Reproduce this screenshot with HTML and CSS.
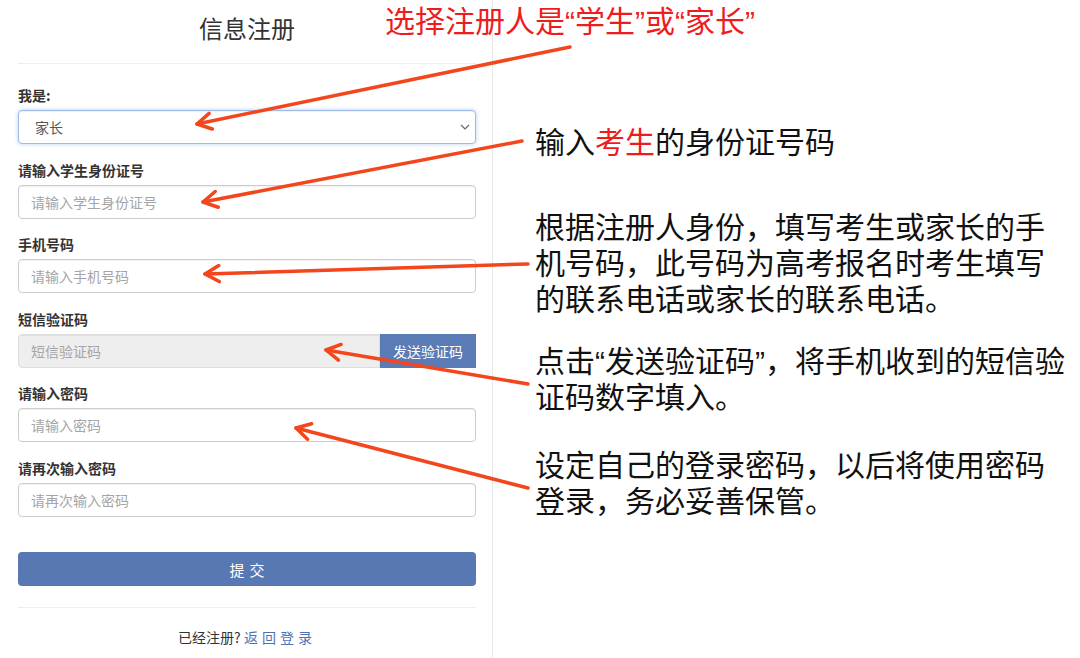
FILE: index.html
```html
<!DOCTYPE html>
<html lang="zh-CN">
<head>
  <meta charset="UTF-8" />
  <meta name="viewport" content="width=device-width, initial-scale=1.0"/>
  <title>信息注册</title>
  <link rel="stylesheet" href="styles.css">
</head>
<body>
  <div class="page">
    <section class="panel">
      <h1 class="title">信息注册</h1>
      <hr class="rule">

      <form class="form">
        <div class="group">
          <label class="label">我是:</label>
          <div class="select-wrap">
            <select class="control control-select">
              <option>家长</option>
              <option>学生</option>
            </select>
            <svg class="chevron" width="10" height="6" viewBox="0 0 10 6">
              <path d="M1 1 L5 5 L9 1" fill="none" stroke="#666" stroke-width="1.2"/>
            </svg>
          </div>
        </div>

        <div class="group">
          <label class="label">请输入学生身份证号</label>
          <input class="control" type="text" placeholder="请输入学生身份证号">
        </div>

        <div class="group">
          <label class="label">手机号码</label>
          <input class="control" type="text" placeholder="请输入手机号码">
        </div>

        <div class="group">
          <label class="label">短信验证码</label>
          <div class="input-group">
            <input class="control control-code" type="text" placeholder="短信验证码" disabled>
            <button type="button" class="btn-send">发送验证码</button>
          </div>
        </div>

        <div class="group">
          <label class="label">请输入密码</label>
          <input class="control" type="password" placeholder="请输入密码">
        </div>

        <div class="group">
          <label class="label">请再次输入密码</label>
          <input class="control" type="password" placeholder="请再次输入密码">
        </div>

        <button type="button" class="btn-submit">提交</button>
      </form>

      <hr class="rule rule-foot">
      <p class="footer">已经注册? <a href="#" class="link">返回登录</a></p>
    </section>

    <aside class="notes">
      <p class="note note-id">输入<span class="hl">考生</span>的身份证号码</p>
      <p class="note note-phone">根据注册人身份，填写考生或家长的手机号码，此号码为高考报名时考生填写的联系电话或家长的联系电话。</p>
      <p class="note note-sms">点击“发送验证码”，将手机收到的短信验证码数字填入。</p>
      <p class="note note-pwd">设定自己的登录密码，以后将使用密码登录，务必妥善保管。</p>
    </aside>

    <p class="note callout-top">选择注册人是“学生”或“家长”</p>

    <!-- pointers from each note to its field -->
    <svg class="arrows" width="1080" height="658" viewBox="0 0 1080 658">
      <defs>
        <marker id="head" markerUnits="userSpaceOnUse" markerWidth="20" markerHeight="20"
                viewBox="0 0 20 20" refX="2" refY="10" orient="auto">
          <path d="M16 2 L2 10 L16 18" fill="none" stroke="#f4461c" stroke-width="3.5"
                stroke-linecap="round" stroke-linejoin="round"/>
        </marker>
      </defs>
      <g fill="none" stroke="#f4461c" stroke-width="3.5" stroke-linecap="round" marker-start="url(#head)">
        <path d="M197 124 L570 47"/>
        <path d="M203 202 L522 141"/>
        <path d="M205 274 L528 264"/>
        <path d="M326 350 L528 384"/>
        <path d="M296 428 L528 488"/>
      </g>
    </svg>
  </div>
</body>
</html>
```

FILE: styles.css
```css
* {
  margin: 0;
  padding: 0;
  box-sizing: border-box;
}

body {
  font-family: "Noto Sans CJK SC", "Noto Sans", sans-serif;
  background: #fff;
  color: #333;
}

.page {
  position: relative;
  display: flex;
  width: 1080px;
  height: 658px;
  overflow: hidden;
}

/* left: the register form */
.panel {
  width: 493px;
  height: 100%;
  padding: 10px 16px 0 18px;
  border-right: 1px solid #e8e8e8;
}

.title {
  font-size: 24px;
  font-weight: normal;
  line-height: 36px;
  text-align: center;
  color: #333;
}

.rule {
  border: none;
  border-top: 1px solid #eee;
  margin: 17px 0 22px;
}

.group {
  margin-bottom: 16.5px;
}

.label {
  display: block;
  font-size: 14px;
  font-weight: bold;
  line-height: 18px;
  margin-bottom: 6px;
  color: #333;
}

.control {
  display: block;
  width: 100%;
  height: 34px;
  padding: 0 12px;
  font-family: inherit;
  font-size: 14px;
  color: #555;
  background: #fff;
  border: 1px solid #ccc;
  border-radius: 4px;
  box-shadow: inset 0 1px 1px rgba(0, 0, 0, 0.06);
  outline: none;
}

.control::placeholder {
  color: #a5a5a5;
}

.select-wrap {
  position: relative;
}

.control-select {
  appearance: none;
  -webkit-appearance: none;
  padding-left: 16px;
  border-color: #9dbbe6;
  box-shadow: inset 0 1px 1px rgba(0, 0, 0, 0.06), 0 0 4px rgba(102, 153, 230, 0.45);
}

.chevron {
  position: absolute;
  right: 6px;
  top: 14px;
}

.input-group {
  display: flex;
}

.control-code {
  flex: 1;
  background: #eee;
  border-color: #ddd;
  border-radius: 4px 0 0 4px;
}

.btn-send {
  width: 96px;
  height: 34px;
  border: none;
  background: #5a7bb6;
  color: #fff;
  font-family: inherit;
  font-size: 14px;
}

.btn-submit {
  display: block;
  width: 100%;
  height: 34px;
  margin-top: 35.5px;
  border: none;
  border-radius: 4px;
  background: #5878b4;
  color: #fff;
  font-family: inherit;
  font-size: 15px;
  letter-spacing: 5px;
  text-indent: 5px;
}

.rule-foot {
  margin: 21px 0 19px;
}

.footer {
  font-size: 14px;
  line-height: 20px;
  text-align: center;
  color: #333;
}

.link {
  color: #4b72b2;
  text-decoration: none;
  letter-spacing: 4px;
}

/* right: notes */
.notes {
  flex: 1;
  padding: 125px 0 0 42px;
}

.note {
  font-family: "Liberation Sans", "Noto Sans CJK SC", sans-serif;
  font-size: 30px;
  line-height: 36px;
  color: #111;
  max-width: 535px;
}

.hl {
  color: #ee1c1c;
}

.note-phone {
  margin-top: 49px;
}

.note-sms {
  margin-top: 26px;
}

.note-pwd {
  margin-top: 32px;
}

.callout-top {
  position: absolute;
  left: 385px;
  top: 4px;
  color: #ee1c1c;
  max-width: none;
}

.arrows {
  position: absolute;
  left: 0;
  top: 0;
  pointer-events: none;
}
```
